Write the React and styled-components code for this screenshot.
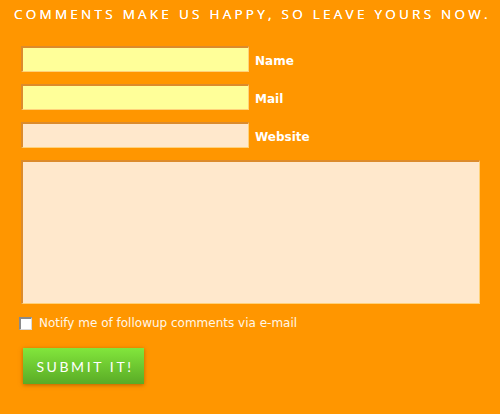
import React from "react";
import styled, { createGlobalStyle } from "styled-components";

const Global = createGlobalStyle`
  html, body {
    margin: 0;
    padding: 0;
    background: #ff9600;
  }
`;

const Page = styled.div`
  min-height: 414px;
  box-sizing: border-box;
  background: #ff9600;
  padding: 8px 14px 0 14px;
  font-family: "DejaVu Sans", sans-serif;
`;

const Title = styled.h3`
  margin: 0;
  font-family: "Open Sans", sans-serif;
  font-weight: 400;
  font-size: 13.5px;
  line-height: 13px;
  letter-spacing: 3.26px;
  color: #fff;
  text-shadow: 0 0 0.4px #fff;
  text-transform: uppercase;
  white-space: nowrap;
`;

const Form = styled.form`
  display: flex;
  flex-direction: column;
  padding: 25px 0 0 7px;
`;

const Row = styled.div`
  display: flex;
  align-items: center;
  gap: 6px;
  margin-bottom: 12px;
`;

const TextInput = styled.input`
  box-sizing: border-box;
  width: 228px;
  height: 26px;
  margin: 0;
  padding: 2px 4px;
  border-width: 2px 1px 1px 2px;
  border-style: solid;
  border-color: #dc8b2c #ffd27a #ffd27a #dc8b2c;
  background: ${p => (p.$required ? "#ffff99" : "#ffe8cc")};
  font-family: "DejaVu Sans", sans-serif;
  font-size: 12px;
  outline: none;
`;

const Label = styled.label`
  padding-top: 3px;
  color: #fff;
  font-weight: bold;
  font-size: 12px;
`;

const Comment = styled.textarea`
  box-sizing: border-box;
  width: 459px;
  height: 144px;
  margin: 0;
  border-width: 2px 1px 1px 2px;
  border-style: solid;
  border-color: #dc8b2c #ffd27a #ffd27a #dc8b2c;
  background: #ffe8cc;
  resize: none;
  outline: none;
`;

const Notify = styled.label`
  display: flex;
  align-items: center;
  gap: 7px;
  margin: 12px 0 0 -2px;
  color: #fff6e8;
  font-size: 12px;
`;

const Box = styled.span`
  box-sizing: border-box;
  width: 13px;
  height: 13px;
  background: #fff;
  border-top: 2px solid #8a8a8a;
  border-left: 2px solid #8a8a8a;
  border-right: 1px solid #d8d8d8;
  border-bottom: 1px solid #d8d8d8;
`;

const Submit = styled.button`
  align-self: flex-start;
  margin: 18px 0 0 2px;
  width: 121px;
  height: 36px;
  border: none;
  background: linear-gradient(#82e63c, #5aab26);
  box-shadow: 0 1px 4px rgba(120, 60, 0, 0.55);
  color: #fff;
  font-family: "Lato", sans-serif;
  font-size: 14px;
  letter-spacing: 2.6px;
  padding: 0 0 0 3px;
  text-transform: uppercase;
`;

export default function App() {
  const fields = [
    { name: "Name", required: true },
    { name: "Mail", required: true },
    { name: "Website", required: false },
  ];
  return (
    <Page>
      <Global />
      <Title>Comments make us happy, so leave yours now.</Title>
      <Form onSubmit={e => e.preventDefault()}>
        {fields.map(f => (
          <Row key={f.name}>
            <TextInput id={f.name} $required={f.required} />
            <Label htmlFor={f.name}>{f.name}</Label>
          </Row>
        ))}
        <Comment />
        <Notify>
          <Box />
          Notify me of followup comments via e-mail
        </Notify>
        <Submit type="submit">Submit it!</Submit>
      </Form>
    </Page>
  );
}
